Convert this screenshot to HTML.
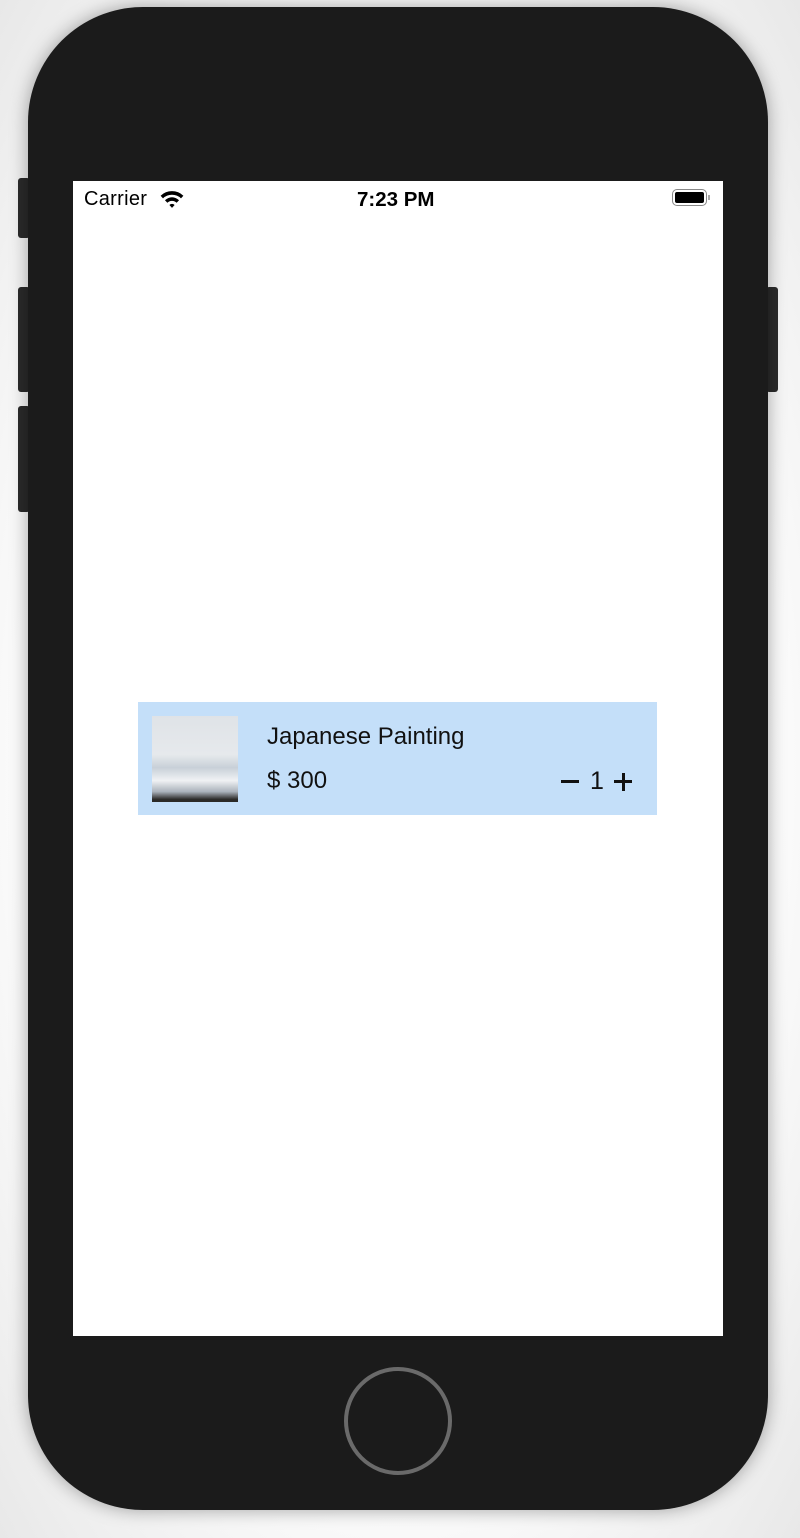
<!DOCTYPE html>
<html><head><style>
html,body{margin:0;padding:0;width:800px;height:1538px;background:#fff;overflow:hidden;font-family:"Liberation Sans",sans-serif}
.bg{position:absolute;left:0;top:0;width:800px;height:1538px;background:radial-gradient(ellipse at center,#fff 60%,#e8e8e8 100%)}
.phone{position:absolute;left:28px;top:7px;width:740px;height:1503px;background:#1b1b1b;border-radius:115px;box-shadow:0 0 18px rgba(0,0,0,.35)}
.btn{position:absolute;background:#2a2a2a;border-radius:3px}
.screen{position:absolute;left:73px;top:181px;width:650px;height:1155px;background:#fff}
.sb{position:absolute;top:0;left:0;width:650px;height:36px;font-size:20px;color:#000}
.card{position:absolute;left:65px;top:521px;width:519px;height:113px;background:#c4dff9}
.img{position:absolute;left:14px;top:14px;width:86px;height:86px;background:linear-gradient(180deg,#dfe3e7 0%,#e6e9ec 45%,#c8d0d8 60%,#f0f2f4 75%,#aab2bb 88%,#2b2a28 97%)}
.home{position:absolute;left:344px;top:1367px;width:100px;height:100px;border:4px solid #6a6a6a;border-radius:50%}
.t{position:absolute;font-size:24px;color:#111}
</style></head><body>
<div class="bg"></div>
<div class="btn" style="left:18px;top:178px;width:12px;height:60px"></div>
<div class="btn" style="left:18px;top:287px;width:12px;height:105px"></div>
<div class="btn" style="left:18px;top:406px;width:12px;height:106px"></div>
<div class="btn" style="left:766px;top:287px;width:12px;height:105px"></div>
<div class="phone"></div>
<div class="home"></div>
<div class="screen">
 <div class="sb">
  <span style="position:absolute;left:11px;top:7px;letter-spacing:0.3px">Carrier</span>
  <svg style="position:absolute;left:86px;top:8px" width="26" height="20" viewBox="0 0 24 18"><path d="M1.5 6A15 15 0 0 1 22.5 6L20.3 8.4A12 12 0 0 0 3.7 8.4Z M5.5 10.2A9 9 0 0 1 18.5 10.2L16.3 12.5A6 6 0 0 0 7.7 12.5Z M9.6 14.5A3.4 3.4 0 0 1 14.4 14.5L12 17.2Z" fill="#000"/></svg>
  <span style="position:absolute;left:284px;top:7px;font-weight:bold;font-size:20.5px">7:23 PM</span>
  <div style="position:absolute;left:599px;top:8px;width:35px;height:17px;border:1.5px solid #888;border-radius:5px;box-sizing:border-box;padding:2px"><div style="width:100%;height:100%;background:#000;border-radius:2px"></div></div>
  <div style="position:absolute;left:635px;top:14px;width:2px;height:5px;background:#aaa"></div>
 </div>
 <div class="card">
  <div class="img"></div>
  <div class="t" style="left:129px;top:21px">Japanese Painting</div>
  <div class="t" style="left:129px;top:65px">$ 300</div>
  <div style="position:absolute;left:423px;top:266px;"></div>
  <div style="position:absolute;left:423px;top:58px;width:18px;height:3px;background:#111;top:78px"></div>
  <div class="t" style="left:452px;top:65px;font-size:25px">1</div>
  <div style="position:absolute;left:476px;top:78px;width:18px;height:3px;background:#111"></div>
  <div style="position:absolute;left:483.5px;top:70.5px;width:3px;height:18px;background:#111"></div>
 </div>
</div>
</body></html>
